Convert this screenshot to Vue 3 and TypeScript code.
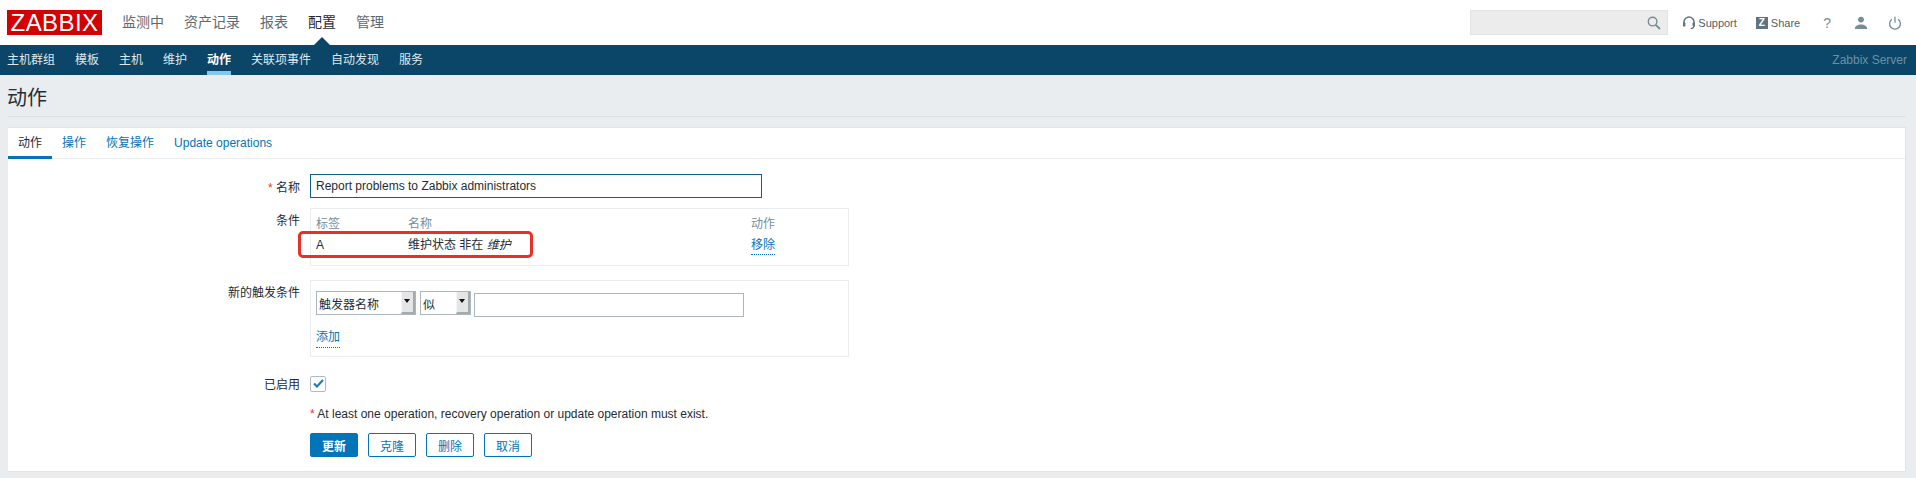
<template>
  <div class="page">
    <header class="top-bar">
      <div class="logo">ZABBIX</div>
      <nav class="main-nav">
        <a v-for="item in mainNav" :key="item" :class="{ selected: item === '配置' }">{{ item }}</a>
      </nav>
      <div class="top-right">
        <div class="search">
          <svg width="14" height="14" viewBox="0 0 14 14" fill="none" stroke="#768d99" stroke-width="1.4">
            <circle cx="5.6" cy="5.6" r="4.3" />
            <path d="M8.8 8.8 13 13" stroke-width="1.8" />
          </svg>
        </div>
        <a class="top-link support">
          <svg width="12" height="14" viewBox="0 0 12 14" fill="none" stroke="#5d7481" stroke-width="1.5">
            <path d="M1 8V6a5 5 0 0 1 10 0v2" />
            <path d="M11 9.5c0 1.8-1.4 3-3.3 3.2" stroke-width="1.2" />
            <rect x="0" y="6.6" width="2.4" height="3.8" rx="0.6" fill="#5d7481" stroke="none" />
            <rect x="9.6" y="6.6" width="2.4" height="3.8" rx="0.6" fill="#5d7481" stroke="none" />
          </svg>
          Support
        </a>
        <a class="top-link share"><span class="z-box">Z</span>Share</a>
        <span class="help">?</span>
        <svg class="user" width="14" height="14" viewBox="0 0 14 14" fill="#768d99">
          <circle cx="7" cy="3.6" r="2.9" />
          <path d="M0.8 13c0-3 2.8-4.6 6.2-4.6s6.2 1.6 6.2 4.6z" />
        </svg>
        <svg class="power" width="14" height="14" viewBox="0 0 14 14" fill="none" stroke="#768d99" stroke-width="1.3">
          <path d="M4 3.2a5.4 5.4 0 1 0 6 0" />
          <path d="M7 0.8v6" />
        </svg>
      </div>
    </header>

    <div class="sub-bar">
      <nav class="sub-nav">
        <a v-for="item in subNav" :key="item" :class="{ selected: item === '动作' }">{{ item }}</a>
      </nav>
      <span class="server-name">Zabbix Server</span>
    </div>

    <main class="content">
      <h1 class="page-title"><span>动作</span></h1>
      <section class="card">
        <div class="tabs">
          <a v-for="tab in tabs" :key="tab" :class="{ selected: tab === '动作' }">{{ tab }}</a>
        </div>
        <form class="form" @submit.prevent>
          <div class="row row-name">
            <label><span class="req">*</span> 名称</label>
            <input class="name-input" type="text" value="Report problems to Zabbix administrators" />
          </div>

          <div class="row row-conditions">
            <label>条件</label>
            <div class="box cond-box">
              <div class="cond-grid">
                <span class="muted">标签</span>
                <span class="muted">名称</span>
                <span class="muted">动作</span>
                <span>A</span>
                <span>维护状态 非在 <em>维护</em></span>
                <span><a class="dotted">移除</a></span>
              </div>
              <div class="highlight"></div>
            </div>
          </div>

          <div class="row row-new">
            <label>新的触发条件</label>
            <div class="box new-box">
              <div class="new-controls">
                <div class="select type-select"><span>触发器名称</span><i></i></div>
                <div class="select op-select"><span>似</span><i></i></div>
                <input class="value-input" type="text" />
              </div>
              <a class="dotted add-link">添加</a>
            </div>
          </div>

          <div class="row row-enabled">
            <label>已启用</label>
            <span class="check">
              <svg width="11" height="9" viewBox="0 0 11 9" fill="none" stroke="#1f7fb3" stroke-width="2.2">
                <path d="M1 4.5 4 7.5 10 1" />
              </svg>
            </span>
          </div>

          <p class="note"><span class="req">*</span> At least one operation, recovery operation or update operation must exist.</p>

          <div class="buttons">
            <button class="primary" type="button">更新</button>
            <button type="button">克隆</button>
            <button type="button">删除</button>
            <button type="button">取消</button>
          </div>
        </form>
      </section>
    </main>
  </div>
</template>

<script setup lang="ts">
const mainNav: string[] = ["监测中", "资产记录", "报表", "配置", "管理"];
const subNav: string[] = ["主机群组", "模板", "主机", "维护", "动作", "关联项事件", "自动发现", "服务"];
const tabs: string[] = ["动作", "操作", "恢复操作", "Update operations"];
</script>

<style>
html,
body {
  margin: 0;
  background: #e9edf0;
}
</style>

<style scoped>
.page {
  width: 1916px;
  height: 478px;
  overflow: hidden;
  background: #e9edf0;
  font-family: "Liberation Sans", "Noto Sans CJK SC", sans-serif;
  font-size: 12px;
  color: #1f2c33;
}

.top-bar {
  display: flex;
  align-items: center;
  height: 45px;
  padding-left: 7px;
  background: #fff;
}

.logo {
  width: 95px;
  height: 25px;
  background: #d40000;
  color: #fff;
  font-size: 24px;
  line-height: 26px;
  text-align: center;
  letter-spacing: 0.4px;
}

.main-nav {
  display: flex;
  gap: 20px;
  margin-left: 20px;
  font-size: 14px;
}

.main-nav a {
  position: relative;
  color: #5b6a72;
  line-height: 45px;
}

.main-nav a.selected {
  color: #1f2c33;
}

.main-nav a.selected::after {
  content: "";
  position: absolute;
  left: 50%;
  bottom: 0;
  margin-left: -8px;
  border: 8px solid transparent;
  border-top: 0;
  border-bottom-color: #0b4668;
}

.top-right {
  display: flex;
  align-items: center;
  margin-left: auto;
}

.search {
  display: flex;
  align-items: center;
  justify-content: flex-end;
  box-sizing: border-box;
  width: 198px;
  height: 25px;
  padding-right: 6px;
  background: #ececec;
  border: 1px solid #e4e4e4;
}

.top-link {
  display: flex;
  align-items: center;
  color: #4f5f68;
  font-size: 11px;
}

.support {
  gap: 3.5px;
  margin-left: 15px;
}

.share {
  gap: 3px;
  margin-left: 19px;
}

.z-box {
  width: 12px;
  height: 12px;
  background: #5d7481;
  color: #fff;
  font-size: 10px;
  font-weight: 700;
  line-height: 12px;
  text-align: center;
}

.help {
  margin-left: 23px;
  color: #768d99;
  font-size: 14px;
}

.user {
  margin-left: 23px;
}

.power {
  margin-left: 20px;
  margin-right: 14px;
}

.sub-bar {
  display: flex;
  align-items: center;
  justify-content: space-between;
  height: 30px;
  padding: 0 9px 0 7px;
  background: #0b4668;
}

.sub-nav {
  display: flex;
  gap: 20px;
}

.sub-nav a {
  height: 30px;
  box-sizing: border-box;
  color: #dfe8ed;
  line-height: 30px;
}

.sub-nav a.selected {
  color: #fff;
  font-weight: 700;
  border-bottom: 4px solid #88c7ed;
}

.server-name {
  color: #6e8fa3;
}

.content {
  padding: 0 10px 0 8px;
}

.page-title {
  height: 42px;
  margin: 0;
  box-sizing: border-box;
  border-bottom: 1px solid #dce1e4;
  color: #262f35;
  font-size: 20px;
  font-weight: 400;
  line-height: 46px;
}

.page-title span {
  margin-left: -1px;
}

.card {
  height: 345px;
  margin-top: 10px;
  box-sizing: border-box;
  background: #fff;
  border: 1px solid #dfe4e7;
  border-left: 0;
}

.tabs {
  display: flex;
  height: 31px;
  box-sizing: border-box;
  border-bottom: 1px solid #ebeef0;
}

.tabs a {
  height: 31px;
  box-sizing: border-box;
  padding: 0 10px;
  color: #0275b8;
  line-height: 30px;
}

.tabs a.selected {
  color: #1f2c33;
  border-bottom: 3px solid #0275b8;
}

.form {
  padding-top: 15px;
}

.row {
  display: grid;
  grid-template-columns: 292px 1fr;
  column-gap: 10px;
}

.row label {
  color: #1f2c33;
  text-align: right;
}

.req {
  color: #e33734;
}

.row-name {
  align-items: center;
  height: 24px;
}

.name-input {
  box-sizing: border-box;
  width: 452px;
  height: 24px;
  padding: 0 5px;
  border: 1px solid #0e5f8a;
  outline: none;
  color: #1f2c33;
  font: inherit;
}

.row-conditions {
  margin-top: 10px;
}

.row-conditions label,
.row-new label {
  padding-top: 3px;
}

.box {
  position: relative;
  box-sizing: border-box;
  width: 539px;
  background: #fff;
  border: 1px solid #ebeef0;
}

.cond-box {
  height: 58px;
  padding: 8px 5px;
}

.cond-grid {
  display: grid;
  grid-template-columns: 92px 343px 1fr;
  row-gap: 6px;
  line-height: 15px;
}

.muted {
  color: #768d99;
}

em {
  font-style: italic;
}

.dotted {
  padding-bottom: 2px;
  border-bottom: 1px dotted #0275b8;
  color: #0275b8;
}

.highlight {
  position: absolute;
  left: -13px;
  top: 22px;
  box-sizing: border-box;
  width: 235px;
  height: 27px;
  border: 3px solid #e5312a;
  border-radius: 5px;
}

.row-new {
  margin-top: 14px;
}

.new-box {
  height: 77px;
  padding: 10px 5px;
}

.new-controls {
  display: flex;
  align-items: flex-start;
}

.select {
  display: flex;
  align-items: center;
  justify-content: space-between;
  box-sizing: border-box;
  height: 24px;
  padding-left: 2px;
  background: #fff;
  border: 1px solid #acb6bc;
}

.select i {
  position: relative;
  display: block;
  box-sizing: border-box;
  width: 14px;
  height: 22px;
  background: #e3e5e7;
  border-left: 1px solid #f4f5f6;
  border-right: 2px solid #a4abaf;
  border-bottom: 2px solid #a4abaf;
}

.select i::after {
  content: "";
  position: absolute;
  left: 2px;
  top: 7px;
  border: 3px solid transparent;
  border-bottom: 0;
  border-top: 4px solid #111;
}

.type-select {
  width: 100px;
}

.op-select {
  width: 51px;
  margin-left: 4px;
}

.value-input {
  box-sizing: border-box;
  width: 270px;
  height: 24px;
  margin: 2px 0 0 3px;
  border: 1px solid #acb6bc;
  outline: none;
}

.add-link {
  display: inline-block;
  margin-top: 13px;
  line-height: 15px;
}

.row-enabled {
  align-items: center;
  margin-top: 18px;
}

.check {
  display: flex;
  align-items: center;
  justify-content: center;
  box-sizing: border-box;
  width: 16px;
  height: 16px;
  border: 1px solid #acbbc4;
  border-radius: 2px;
}

.note {
  margin: 15px 0 0 302px;
  line-height: 15px;
}

.buttons {
  display: flex;
  gap: 10px;
  margin: 11px 0 0 302px;
}

button {
  box-sizing: border-box;
  width: 48px;
  height: 24px;
  padding: 0;
  background: #fff;
  border: 1px solid #0275b8;
  border-radius: 2px;
  color: #0275b8;
  font: inherit;
}

button.primary {
  background: #0275b8;
  color: #fff;
  font-weight: 700;
}
</style>
